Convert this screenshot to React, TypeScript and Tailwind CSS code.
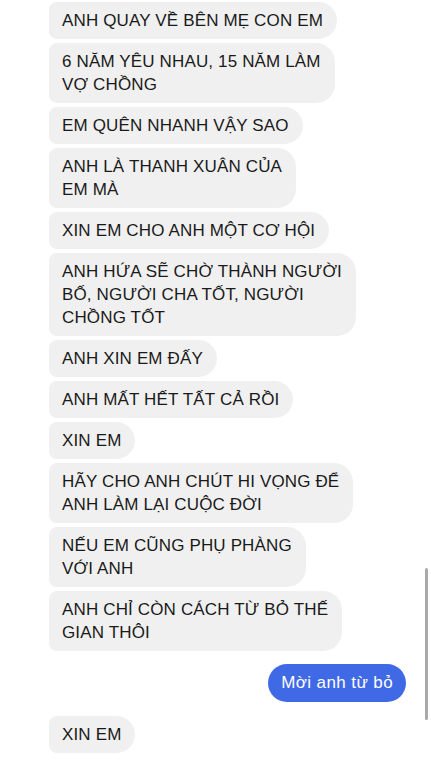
import React from "react";

interface Message {
  from: "them" | "me";
  lines: string[];
}

const messages: Message[] = [
  { from: "them", lines: ["ANH QUAY VỀ BÊN MẸ CON EM"] },
  { from: "them", lines: ["6 NĂM YÊU NHAU, 15 NĂM LÀM", "VỢ CHỒNG"] },
  { from: "them", lines: ["EM QUÊN NHANH VẬY SAO"] },
  { from: "them", lines: ["ANH LÀ THANH XUÂN CỦA", "EM MÀ"] },
  { from: "them", lines: ["XIN EM CHO ANH MỘT CƠ HỘI"] },
  {
    from: "them",
    lines: ["ANH HỨA SẼ CHỜ THÀNH NGƯỜI", "BỐ, NGƯỜI CHA TỐT, NGƯỜI", "CHỒNG TỐT"],
  },
  { from: "them", lines: ["ANH XIN EM ĐẤY"] },
  { from: "them", lines: ["ANH MẤT HẾT TẤT CẢ RỒI"] },
  { from: "them", lines: ["XIN EM"] },
  { from: "them", lines: ["HÃY CHO ANH CHÚT HI VỌNG ĐỂ", "ANH LÀM LẠI CUỘC ĐỜI"] },
  { from: "them", lines: ["NẾU EM CŨNG PHỤ PHÀNG", "VỚI ANH"] },
  { from: "them", lines: ["ANH CHỈ CÒN CÁCH TỪ BỎ THẾ", "GIAN THÔI"] },
];

const Bubble = ({ lines }: { lines: string[] }) => (
  <div className="w-fit rounded-l-[8px] rounded-r-[19px] bg-[#f0f0f0] py-[7px] pl-[13px] pr-[14px] text-[17px] leading-[23px] tracking-[0.15px] text-[#1a1a1a]">
    {lines.map((line, i) => (
      <div key={i} className="whitespace-nowrap">
        {line}
      </div>
    ))}
  </div>
);

export default function App() {
  return (
    <div
      className="relative h-[767px] w-[431px] overflow-hidden bg-white"
      style={{ fontFamily: '"Liberation Sans", Arial, sans-serif' }}
    >
      <div className="flex flex-col pl-[49px] pr-[25px] pt-[2px]">
        <div className="flex flex-col gap-[4px]">
          {messages.map((m, i) => (
            <Bubble key={i} lines={m.lines} />
          ))}
        </div>

        {/* my reply */}
        <div className="mt-[13px] flex justify-end">
          <div className="rounded-full bg-[#4069e6] px-[13px] py-[7px] text-[17px] leading-[24px] tracking-[0.4px] text-white">
            Mời anh từ bỏ
          </div>
        </div>

        <div className="mt-[14px]">
          <Bubble lines={["XIN EM"]} />
        </div>
      </div>

      {/* scrollbar */}
      <div className="absolute right-[3px] top-[568px] h-[152px] w-[3px] rounded-full bg-[#a9a9a9]" />
    </div>
  );
}
